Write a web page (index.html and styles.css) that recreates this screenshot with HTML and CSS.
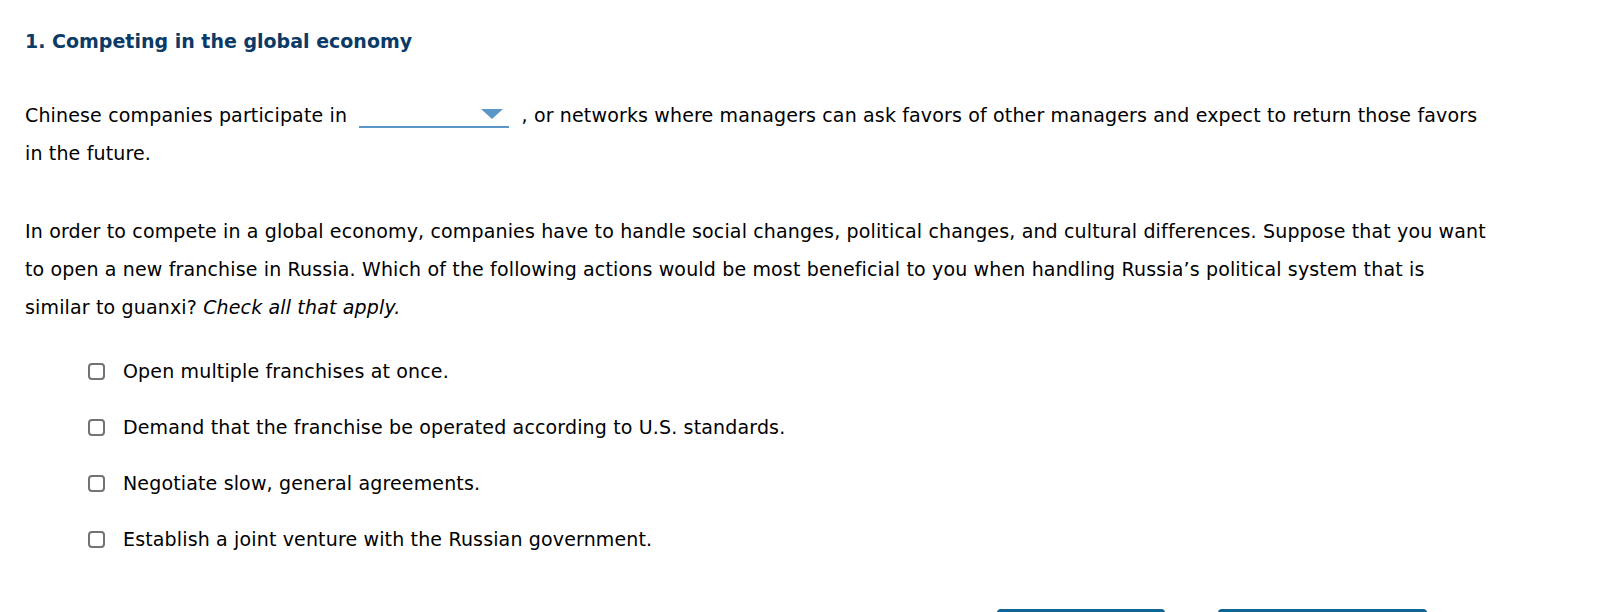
FILE: index.html
```html
<!DOCTYPE html>
<html lang="en">
<head>
  <meta charset="UTF-8" />
  <meta name="viewport" content="width=device-width, initial-scale=1.0" />
  <title>Competing in the global economy</title>
  <link rel="stylesheet" href="styles.css">
</head>
<body>
  <div class="question">
    <h2 class="question__title">1. Competing in the global economy</h2>
    <p class="question__text">
      Chinese companies participate in <span class="dropdown"><span class="dropdown__arrow"></span></span> , or networks where managers can ask favors of other managers and expect to return those favors in the future.
    </p>
    <p class="question__text question__text--gap">
      In order to compete in a global economy, companies have to handle social changes, political changes, and cultural differences. Suppose that you want to open a new franchise in Russia. Which of the following actions would be most beneficial to you when handling Russia’s political system that is similar to guanxi? <em>Check all that apply.</em>
    </p>
    <ul class="options">
      <li class="option"><span class="option__box"></span>Open multiple franchises at once.</li>
      <li class="option"><span class="option__box"></span>Demand that the franchise be operated according to U.S. standards.</li>
      <li class="option"><span class="option__box"></span>Negotiate slow, general agreements.</li>
      <li class="option"><span class="option__box"></span>Establish a joint venture with the Russian government.</li>
    </ul>
    <div class="actions">
      <button class="action action--grade">Grade It Now</button>
      <button class="action action--save">Save &amp; Continue</button>
    </div>
  </div>
</body>
</html>
```

FILE: styles.css
```css
:root {
  --title-color: #0b3a66;
  --text-color: #000;
  --link-blue: #5b96c8;
  --box-border: #737373;
  --button-bg: #0f6496;
}
* {
  box-sizing: border-box;
  margin: 0;
  padding: 0;
}
body {
  font-family: 'DejaVu Sans', Verdana, sans-serif;
  font-size: 19px;
  color: var(--text-color);
  background: #fff;
}
.question {
  width: 1488px;
  padding: 29px 0 0 25px;
}
.question__title {
  font-size: 19px;
  font-weight: bold;
  color: var(--title-color);
  line-height: 24px;
  margin-bottom: 43px;
}
.question__text {
  line-height: 38px;
  letter-spacing: 0.15px;
}
.question__text--gap {
  margin-top: 40px;
}
.question__text em {
  font-style: italic;
}
.dropdown {
  display: inline-block;
  width: 150px;
  height: 22px;
  padding: 3px 6px 0 0;
  margin: 0 6px 0 6px;
  border-bottom: 2px solid var(--link-blue);
  vertical-align: -6px;
}
.dropdown__arrow {
  display: block;
  width: 0;
  height: 0;
  margin-left: auto;
  border-left: 11px solid transparent;
  border-right: 11px solid transparent;
  border-top: 10px solid var(--link-blue);
}
.options {
  list-style: none;
  padding: 33px 0 0 63px;
  display: flex;
  flex-direction: column;
  gap: 32px;
}
.option {
  display: flex;
  align-items: center;
  line-height: 24px;
  letter-spacing: 0.15px;
}
.option__box {
  width: 17px;
  height: 17px;
  border: 2px solid var(--box-border);
  border-radius: 4px;
  margin-right: 18px;
  flex-shrink: 0;
}
.actions {
  display: flex;
  gap: 53px;
  margin: 58px 0 0 972px;
}
.action {
  height: 40px;
  border: none;
  border-radius: 4px;
  background: var(--button-bg);
  color: #fff;
  font-family: inherit;
  font-size: 16px;
}
.action--grade {
  width: 168px;
}
.action--save {
  width: 209px;
}
```
